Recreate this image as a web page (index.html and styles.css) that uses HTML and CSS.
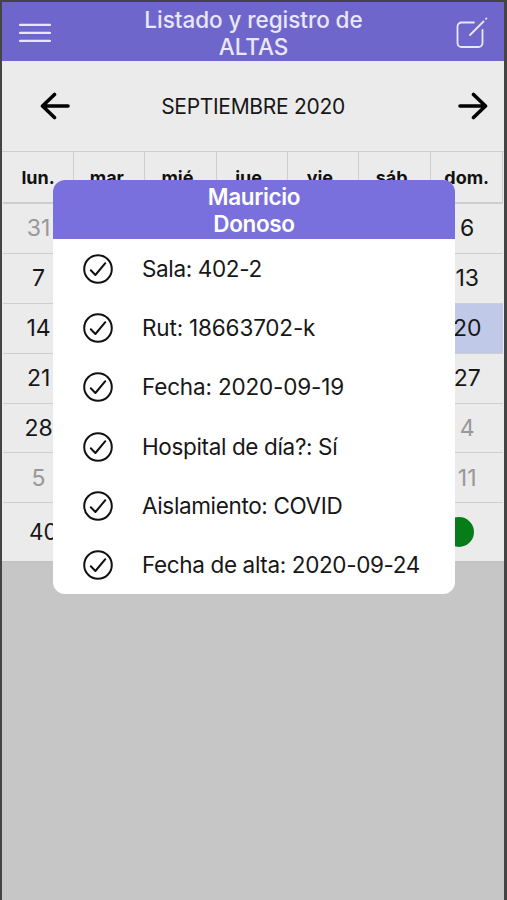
FILE: index.html
```html
<!DOCTYPE html>
<html lang="es">
<head>
<meta charset="utf-8">
<title>Listado y registro de ALTAS</title>
<link rel="stylesheet" href="styles.css">
</head>
<body>
<svg class="defs" width="0" height="0" aria-hidden="true">
  <symbol id="check" viewBox="0 0 30 30">
    <circle cx="15" cy="15" r="13.8"/>
    <path d="M7.8 16.2 12.4 21 22.3 9.2"/>
  </symbol>
</svg>
<div class="app">
  <header class="topbar">
    <svg class="menu" viewBox="0 0 32 20"><path d="M1 1.8H31M1 9.8H31M1 17.8H31"/></svg>
    <h1 class="title">Listado y registro de<br>ALTAS</h1>
    <svg class="compose" viewBox="0 0 32 32"><path d="M18 6.500H5.5A4 4 0 0 0 1.5 10.500V27A4 4 0 0 0 5.5 31H22.500A4 4 0 0 0 26.500 27V14M14 19 27.500 5.500M30 2.800 30.400 2.400"/></svg>
  </header>
  <nav class="month">
    <svg class="arrow" viewBox="0 0 30 28"><path d="M28 14H2.500M14.500 2.500 2.500 14 14.500 25.500"/></svg>
    <span class="month-name">SEPTIEMBRE 2020</span>
    <svg class="arrow" viewBox="0 0 30 28"><path d="M2 14H27.500M15.500 2.500 27.500 14 15.500 25.500"/></svg>
  </nav>
  <main class="calendar">
    <div class="week head"><span>lun.</span><span>mar.</span><span>mié.</span><span>jue.</span><span>vie.</span><span>sáb.</span><span>dom.</span></div>
    <div class="week"><span class="out">31</span><span></span><span></span><span></span><span></span><span></span><span>6</span></div>
    <div class="week"><span>7</span><span></span><span></span><span></span><span></span><span></span><span>13</span></div>
    <div class="week"><span>14</span><span></span><span></span><span></span><span></span><span></span><span class="selected">20</span></div>
    <div class="week"><span>21</span><span></span><span></span><span></span><span></span><span></span><span>27</span></div>
    <div class="week"><span>28</span><span></span><span></span><span></span><span></span><span></span><span class="out">4</span></div>
    <div class="week"><span class="out">5</span><span></span><span></span><span></span><span></span><span></span><span class="out">11</span></div>
  </main>
  <div class="entry"><span>402</span><i class="dot"></i></div>
  <section class="modal">
    <h2 class="modal-title">Mauricio<br>Donoso</h2>
    <ul class="details">
      <li><svg class="check"><use href="#check"/></svg><span>Sala: 402-2</span></li>
      <li><svg class="check"><use href="#check"/></svg><span class="wide">Rut: 18663702-k</span></li>
      <li><svg class="check"><use href="#check"/></svg><span class="wide">Fecha: 2020-09-19</span></li>
      <li><svg class="check"><use href="#check"/></svg><span>Hospital de día?: Sí</span></li>
      <li><svg class="check"><use href="#check"/></svg><span>Aislamiento: COVID</span></li>
      <li><svg class="check"><use href="#check"/></svg><span>Fecha de alta: 2020-09-24</span></li>
    </ul>
  </section>
</div>
</body>
</html>
```
FILE: styles.css
```css
* { box-sizing: border-box; }
body {
  margin: 0;
  font-family: Inter, "Liberation Sans", sans-serif;
  color: #171717;
}
.defs { position: absolute; }
svg { fill: none; stroke-linecap: round; stroke-linejoin: round; flex: none; }
.app {
  position: relative;
  height: 900px;
  overflow: hidden;
  background: #c6c6c6;
  border: solid #444;
  border-width: 2px 3px 0 2px;
}
.topbar {
  height: 59px;
  padding: 0 16px 0 17px;
  display: flex;
  align-items: center;
  justify-content: space-between;
  background: #6f66cc;
  color: #e9e7fa;
  stroke: #e9e7fa;
}
.title {
  margin: 2px 0 0;
  font-size: 22.500px;
  letter-spacing: -0.050px;
  line-height: 27px;
  font-weight: 500;
  text-align: center;
  stroke: none;
}
.menu { width: 32px; height: 20px; stroke-width: 2.2; margin-top: 2px; }
.compose { width: 32px; height: 32px; stroke-width: 1.800; }
.month {
  height: 90px;
  padding: 0 16px 0 38px;
  display: flex;
  align-items: center;
  justify-content: space-between;
  background: #ebebeb;
  stroke: #000;
}
.month-name { margin-right: 22px; font-size: 21px; letter-spacing: -0.3px; stroke: none; }
.arrow { width: 30px; height: 28px; stroke-width: 3.6; }
.calendar { background: #ebebeb; border-top: 1px solid #cecece; padding: 0 1px; }
.week {
  display: grid;
  grid-template-columns: repeat(5, 71.200px) 72.500px 1fr;
  height: 49.900px;
  font-size: 23px;
}
.week span {
  display: flex;
  align-items: center;
  justify-content: center;
  border-bottom: 1px solid #cecece;
}
.week.head { height: 52px; font-size: 18px; font-weight: 700; color: #111; }
.week.head span { border-bottom-width: 2px; border-right: 1px solid #cecece; }
.week .out { color: #989898; }
.week .selected { background: #c1c9e9; }
.entry {
  height: 59px;
  padding: 0 30px 2px 27px;
  display: flex;
  align-items: center;
  justify-content: space-between;
  background: #ebebeb;
  border-bottom: 1px solid #c0c0c0;
  font-size: 22.500px;
}
.dot { width: 30px; height: 30px; margin-top: 2px; border-radius: 50%; background: #067d18; }
.modal {
  position: absolute;
  left: 51px;
  top: 178px;
  width: 402px;
  height: 414px;
  border-radius: 12px;
  overflow: hidden;
  background: #fff;
}
.modal-title {
  margin: 0;
  height: 59px;
  padding-top: 3px;
  background: #7a70dd;
  color: #fff;
  font-size: 22.500px;
  letter-spacing: -0.350px;
  line-height: 27px;
  font-weight: 600;
  text-align: center;
}
.details { margin: 0; padding: 1px 0 0; list-style: none; }
.details li {
  height: 59.200px;
  padding-left: 30px;
  display: flex;
  align-items: center;
  gap: 29px;
  font-size: 22.500px;
  letter-spacing: -0.360px;
}
.details span { margin-top: -2px; }
.details .wide { letter-spacing: -0.170px; }
.check { width: 30px; height: 30px; margin-top: -1px; stroke: #111; stroke-width: 2; }
```
